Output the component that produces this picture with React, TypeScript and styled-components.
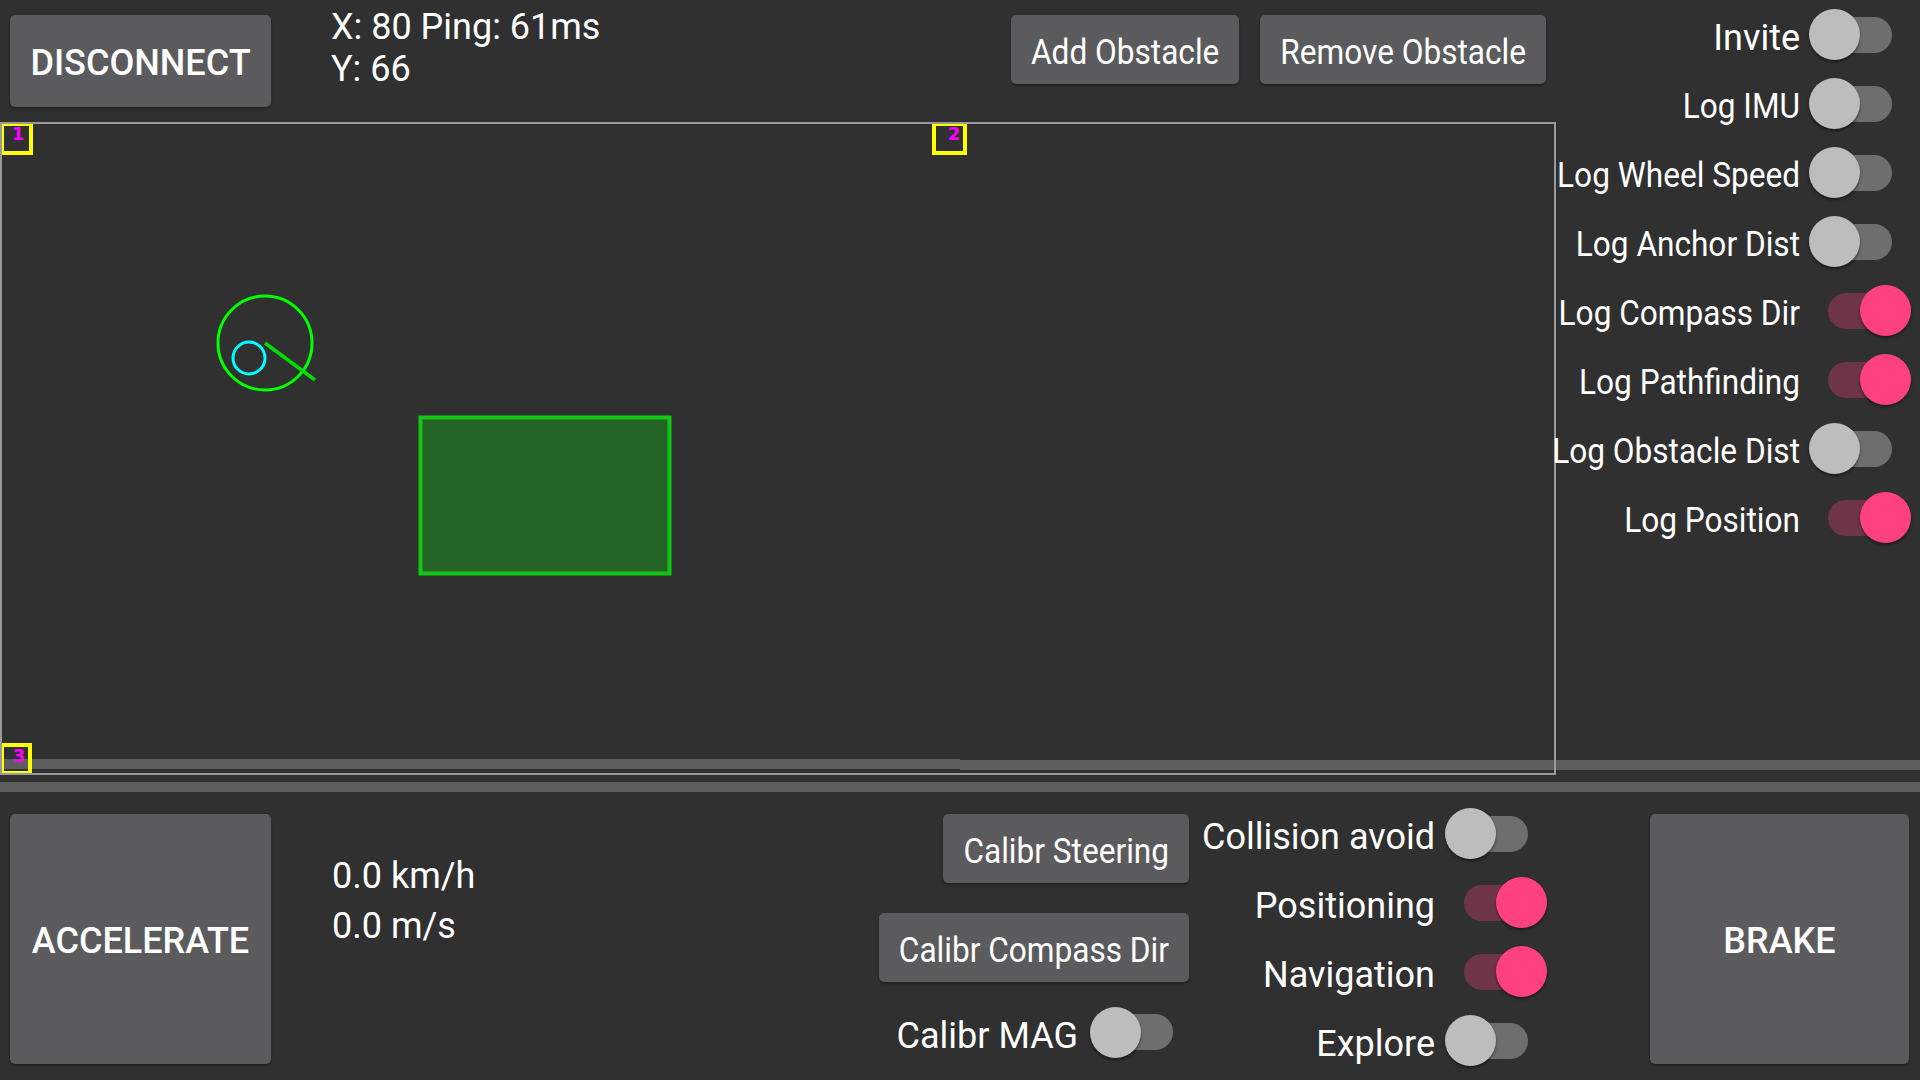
import React from "react";
import styled, { createGlobalStyle } from "styled-components";

const GlobalStyle = createGlobalStyle`
  html, body { margin: 0; padding: 0; background: #303030; }
  body { font-family: Roboto, "Liberation Sans", sans-serif; color: #ffffff; }
  * { box-sizing: border-box; }
`;

const Page = styled.div`
  width: 1920px;
  height: 1080px;
  background: #303030;
  overflow: hidden;
  display: flex;
  flex-direction: column;
  font-family: Roboto, "Liberation Sans", sans-serif;
  color: #ffffff;
`;

const Upper = styled.div`
  display: grid;
  grid-template-columns: 1556px 364px;
  grid-template-rows: 122px 637px 10px 6px 7px 10px;
`;

const TopBar = styled.div`
  grid-row: 1;
  grid-column: 1;
  display: flex;
  align-items: flex-start;
  padding: 0 10px 0 10px;
`;

const BaseButton = styled.div`
  display: flex;
  align-items: center;
  justify-content: center;
  background: #5b5b5d;
  border-radius: 5px;
  color: #ffffff;
  box-shadow: 0 2px 2px rgba(0, 0, 0, 0.28), 0 0 2px rgba(0, 0, 0, 0.14);
  flex: none;
`;

const BigButton = styled(BaseButton)<{ $w: number; $h: number }>`
  width: ${(p) => p.$w}px;
  height: ${(p) => p.$h}px;
  margin-top: 15px;
  padding-top: 4px;
  font-size: 36px;
  font-weight: 500;
`;

const GrayButton = styled(BaseButton)`
  height: 69px;
  padding: 6px 20px 0;
`;

const Squeeze = styled.span`
  display: inline-block;
  font-size: 31.6px;
  line-height: 38px;
  white-space: nowrap;
  transform: scaleY(1.13);
`;

const Coords = styled.div`
  margin: 6px 0 0 60px;
  font-size: 36px;
  line-height: 42px;
`;

const ObstacleGroup = styled.div`
  margin: 15px 0 0 auto;
  display: flex;
  gap: 21px;
`;

const Canvas = styled.div`
  grid-row: 2 / 5;
  grid-column: 1;
  border: 2px solid #9a9a9a;
  position: relative;
  z-index: 1;
  svg {
    display: block;
  }
`;

const SwitchPanel = styled.div`
  grid-row: 1 / 3;
  grid-column: 2;
  display: flex;
  flex-direction: column;
  align-items: flex-end;
  padding-right: 9px;
  min-width: 0;
  z-index: 2;
`;

const ToggleRow = styled.div<{ $gap?: number }>`
  display: flex;
  align-items: center;
  justify-content: flex-end;
  height: 69px;
  gap: ${(p) => p.$gap ?? 9}px;
  white-space: nowrap;
`;

const Label = styled.span`
  margin-top: 7px;
  font-size: 36px;
  line-height: 42px;
`;

const SqueezeLabel = styled(Squeeze)`
  margin-top: 7px;
`;

const SwitchBox = styled.span`
  position: relative;
  width: 102px;
  height: 51px;
  flex: none;
`;

const Track = styled.span<{ $on: boolean }>`
  position: absolute;
  left: 19px;
  top: 7.5px;
  width: 64px;
  height: 36px;
  border-radius: 18px;
  background: ${(p) => (p.$on ? "#6e3548" : "#6e6e6e")};
`;

const Thumb = styled.span<{ $on: boolean }>`
  position: absolute;
  top: 0;
  left: ${(p) => (p.$on ? 51 : 0)}px;
  width: 51px;
  height: 51px;
  border-radius: 50%;
  background: ${(p) => (p.$on ? "#ff4081" : "#bdbdbd")};
  box-shadow: 0 2px 3px rgba(0, 0, 0, 0.45);
`;

const SeekBar = styled.div`
  grid-row: 3;
  grid-column: 1 / -1;
  display: flex;
  z-index: 0;
`;

const SeekHalf = styled.div<{ $drop?: boolean }>`
  flex: 1;
  height: 10px;
  margin-top: ${(p) => (p.$drop ? 1 : 0)}px;
  background: #5d5d5d;
`;

const Divider = styled.div`
  grid-row: 6;
  grid-column: 1 / -1;
  background: #5d5d5d;
`;

const Lower = styled.div`
  height: 288px;
  display: flex;
  align-items: flex-start;
  padding: 7px 11px 0 10px;
`;

const SpeedText = styled.div`
  flex: 1;
  margin: 52px 0 0 61px;
  font-size: 36px;
  line-height: 50px;
`;

const CalibColumn = styled.div`
  margin-top: 15px;
  display: flex;
  flex-direction: column;
  align-items: flex-end;
  gap: 30px;
`;

const CalibButton = styled(GrayButton)`
  margin-right: 3px;
`;

const CalibRow = styled(ToggleRow)`
  margin-top: -14.5px;
`;

const ModeColumn = styled.div`
  width: 346px;
  margin: 0 103px 0 9px;
  display: flex;
  flex-direction: column;
  align-items: flex-end;
`;

const Toggle: React.FC<{ on?: boolean }> = ({ on = false }) => (
  <SwitchBox>
    <Track $on={on} />
    <Thumb $on={on} />
  </SwitchBox>
);

const logToggles: { label: string; on: boolean; narrow: boolean }[] = [
  { label: "Invite", on: false, narrow: false },
  { label: "Log IMU", on: false, narrow: true },
  { label: "Log Wheel Speed", on: false, narrow: true },
  { label: "Log Anchor Dist", on: false, narrow: true },
  { label: "Log Compass Dir", on: true, narrow: true },
  { label: "Log Pathfinding", on: true, narrow: true },
  { label: "Log Obstacle Dist", on: false, narrow: true },
  { label: "Log Position", on: true, narrow: true },
];

const modeToggles: { label: string; on: boolean }[] = [
  { label: "Collision avoid", on: false },
  { label: "Positioning", on: true },
  { label: "Navigation", on: true },
  { label: "Explore", on: false },
];

const anchors = [
  { x: 0, y: 122, w: 33, h: 33, n: "1", tx: 18, ty: 140 },
  { x: 932, y: 122, w: 35, h: 33, n: "2", tx: 954, ty: 140 },
  { x: 0, y: 743, w: 32, h: 32, n: "3", tx: 19, ty: 762 },
];

const MapDrawing: React.FC = () => (
  <svg width="1552" height="649" viewBox="0 0 1552 649">
    <g transform="translate(-2 -124)">
      <rect x="420.5" y="417.5" width="249" height="156" fill="#246427" stroke="#13c613" strokeWidth="4" />
      <circle cx="265" cy="343" r="47" fill="none" stroke="#00ff00" strokeWidth="3" />
      <circle cx="249" cy="358" r="16" fill="none" stroke="#00ffff" strokeWidth="3" />
      <line x1="265" y1="343" x2="315" y2="380" stroke="#00dd00" strokeWidth="3.5" />
      {anchors.map((a) => (
        <g key={a.n}>
          <rect x={a.x + 2} y={a.y + 2} width={a.w - 4} height={a.h - 4} fill="none" stroke="#ffff00" strokeWidth="4" />
          <text
            x={a.tx}
            y={a.ty}
            fill="#ff00ff"
            fontSize="18"
            fontWeight="900"
            fontFamily="'DejaVu Sans', sans-serif"
            textAnchor="middle"
          >
            {a.n}
          </text>
        </g>
      ))}
    </g>
  </svg>
);

export default function App() {
  return (
    <Page>
      <GlobalStyle />
      <Upper>
        <TopBar>
          <BigButton $w={261} $h={92}>DISCONNECT</BigButton>
          <Coords>
            X: 80 Ping: 61ms
            <br />
            Y: 66
          </Coords>
          <ObstacleGroup>
            <GrayButton>
              <Squeeze>Add Obstacle</Squeeze>
            </GrayButton>
            <GrayButton>
              <Squeeze>Remove Obstacle</Squeeze>
            </GrayButton>
          </ObstacleGroup>
        </TopBar>
        <Canvas>
          <MapDrawing />
        </Canvas>
        <SwitchPanel>
          {logToggles.map((t) => (
            <ToggleRow key={t.label}>
              {t.narrow ? <SqueezeLabel>{t.label}</SqueezeLabel> : <Label>{t.label}</Label>}
              <Toggle on={t.on} />
            </ToggleRow>
          ))}
        </SwitchPanel>
        <SeekBar>
          <SeekHalf />
          <SeekHalf $drop />
        </SeekBar>
        <Divider />
      </Upper>
      <Lower>
        <BigButton $w={261} $h={250}>ACCELERATE</BigButton>
        <SpeedText>
          0.0 km/h
          <br />
          0.0 m/s
        </SpeedText>
        <CalibColumn>
          <CalibButton>
            <Squeeze>Calibr Steering</Squeeze>
          </CalibButton>
          <CalibButton>
            <Squeeze>Calibr Compass Dir</Squeeze>
          </CalibButton>
          <CalibRow $gap={12}>
            <Label>Calibr MAG</Label>
            <Toggle />
          </CalibRow>
        </CalibColumn>
        <ModeColumn>
          {modeToggles.map((t) => (
            <ToggleRow key={t.label} $gap={10}>
              <Label>{t.label}</Label>
              <Toggle on={t.on} />
            </ToggleRow>
          ))}
        </ModeColumn>
        <BigButton $w={259} $h={250}>BRAKE</BigButton>
      </Lower>
    </Page>
  );
}
